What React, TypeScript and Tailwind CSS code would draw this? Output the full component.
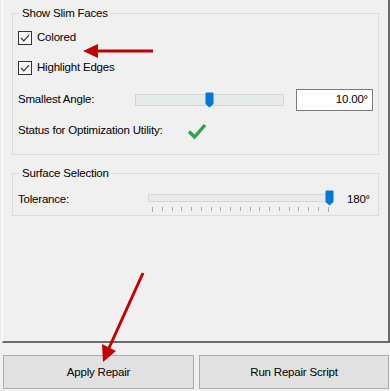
import React from 'react';

function CheckBox({ label }: { label: string }) {
    return (
        <div className="flex h-[20px] items-center">
            <div className="flex h-[14px] w-[14px] items-center justify-center border border-[#333333] bg-[#f7f7f7]">
                <svg width="10" height="8" viewBox="0 0 10 8">
                    <path d="M1 4 L3.8 6.8 L9 1.2" fill="none" stroke="#333" strokeWidth="1.2" />
                </svg>
            </div>
            <span className="ml-[5px]">{label}</span>
        </div>
    );
}

function Thumb() {
    return (
        <svg width="9" height="16" viewBox="0 0 9 16">
            <path d="M0.5 1.5 Q0.5 0.5 1.5 0.5 L7.5 0.5 Q8.5 0.5 8.5 1.5 L8.5 12 L4.5 15.5 L0.5 12 Z" fill="#0078d7" />
        </svg>
    );
}

function GroupBox({ title, children }: { title: string; children: React.ReactNode }) {
    return (
        <fieldset className="mx-[9px] border border-[#dcdcdc] px-[5px]">
            <legend className="ml-[2px] h-[14px] px-[2px] leading-[14px]">{title}</legend>
            {children}
        </fieldset>
    );
}

export default function App() {
    const ticks = Array.from({ length: 19 }, (_, i) => i);

    return (
        <div className="relative flex h-[391px] w-[390px] flex-col overflow-hidden bg-[#f0f0f0] text-[11.5px] tracking-[-0.2px] text-black [font-family:'Liberation_Sans',Arial,sans-serif]">
            <div className="ml-[2px] flex h-[343px] flex-col border-b-2 border-l border-r-2 border-b-[#6b6b6b] border-l-white border-r-[#6b6b6b] pt-[6px]">
                <GroupBox title="Show Slim Faces">
                    <div className="mt-[8px]">
                        <CheckBox label="Colored" />
                    </div>
                    <div className="mt-[10px]">
                        <CheckBox label="Highlight Edges" />
                    </div>
                    <div className="mt-[11px] flex h-[21px] items-center">
                        <span className="w-[117px]">Smallest Angle:</span>
                        <div className="relative h-[21px] w-[149px]">
                            <div className="absolute left-0 right-0 top-[5px] h-[12px] border border-[#d6d6d6] bg-[#e7eaea]" />
                            <div className="absolute left-[70px] top-[3px] flex">
                                <Thumb />
                            </div>
                        </div>
                        <div className="ml-[12px] flex h-[22px] w-[77px] items-center justify-end border border-[#7a7a7a] bg-white pr-[4px]">
                            10.00°
                        </div>
                    </div>
                    <div className="mt-[11px] flex h-[20px] items-center">
                        <span className="w-[169px]">Status for Optimization Utility:</span>
                        <svg width="20" height="18" viewBox="0 0 20 18">
                            <path d="M2 9.5 L7.5 15 L18 3" fill="none" stroke="#2ea44f" strokeWidth="3.4" />
                        </svg>
                    </div>
                    <div className="h-[13px]" />
                </GroupBox>

                <div className="mt-[11px]">
                    <GroupBox title="Surface Selection">
                        <div className="mt-[10px] flex items-start">
                            <span className="h-[18px] w-[130px] leading-[18px]">Tolerance:</span>
                            <div className="relative h-[23px] w-[186px]">
                                <div className="absolute left-0 top-[4px] h-[8px] w-[181px] border border-[#d6d6d6] bg-[#e7eaea]" />
                                <div className="absolute left-[177px] top-0 flex">
                                    <Thumb />
                                </div>
                                <div className="absolute left-[4px] top-[17px] flex w-[177px] justify-between">
                                    {ticks.map((t) => (
                                        <div
                                            key={t}
                                            className={t === 0 || t === 18 ? 'h-[5px] w-px bg-[#a8a8a8]' : 'h-[4px] w-px bg-[#a8a8a8]'}
                                        />
                                    ))}
                                </div>
                            </div>
                            <span className="ml-[13px] h-[18px] leading-[18px]">180°</span>
                        </div>
                        <div className="h-[2px]" />
                    </GroupBox>
                </div>
            </div>

            <div className="mt-[12px] flex gap-[5px] pl-[3px]">
                <button className="h-[34px] w-[191px] border border-[#adadad] bg-[#e1e1e1] pt-[1px]">Apply Repair</button>
                <button className="h-[34px] w-[190px] border border-[#adadad] bg-[#e1e1e1] pt-[1px]">Run Repair Script</button>
            </div>

            {/* annotation arrows */}
            <svg className="pointer-events-none absolute left-0 top-0" width="390" height="391">
                <line x1="153" y1="51" x2="96" y2="51" stroke="#c00000" strokeWidth="3" />
                <polygon points="83,51 98,44 98,58" fill="#c00000" />
                <line x1="143" y1="273" x2="109" y2="348" stroke="#c00000" strokeWidth="3" />
                <polygon points="103,362 102,344 116,351" fill="#c00000" />
            </svg>
        </div>
    );
}
